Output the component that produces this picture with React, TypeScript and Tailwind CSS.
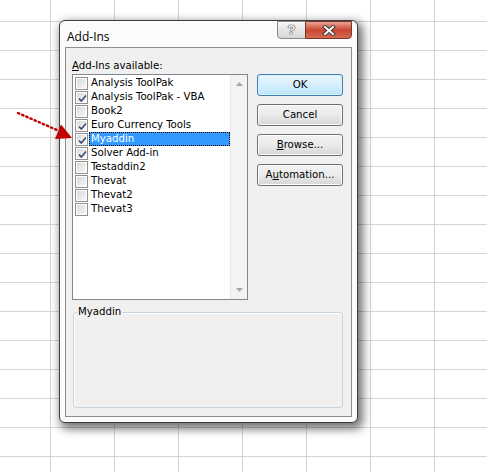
import React from "react";

const addins = [
  { name: "Analysis ToolPak", checked: false },
  { name: "Analysis ToolPak - VBA", checked: true },
  { name: "Book2", checked: false },
  { name: "Euro Currency Tools", checked: true },
  { name: "Myaddin", checked: true, selected: true },
  { name: "Solver Add-in", checked: true },
  { name: "Testaddin2", checked: false },
  { name: "Thevat", checked: false },
  { name: "Thevat2", checked: false },
  { name: "Thevat3", checked: false },
];

const ui = "font-['DejaVu_Sans_Condensed','Liberation_Sans',sans-serif] text-[11.3px]";

function CheckBox({ checked }: { checked: boolean }) {
  return (
    <div className="w-[13px] h-[13px] shrink-0 border border-[#8e8f8f] bg-white p-px">
      <div className="relative w-full h-full bg-gradient-to-br from-[#d9d9d9] to-[#f8f8f8]">
        {checked && (
          <svg className="absolute inset-0" width="11" height="11" viewBox="0 0 11 11">
            <path d="M2 5.5 L4.3 8 L9 2.5" fill="none" stroke="#3d4f7e" strokeWidth="1.7" />
          </svg>
        )}
      </div>
    </div>
  );
}

function Button({ label, u, isDefault }: { label: string; u?: number; isDefault?: boolean }) {
  const text =
    u === undefined ? (
      label
    ) : (
      <>
        {label.slice(0, u)}
        <span className="underline">{label[u]}</span>
        {label.slice(u + 1)}
      </>
    );
  return (
    <div
      className={`h-[22px] w-[86px] rounded-[3px] border flex items-center justify-center text-black ${
        isDefault
          ? "border-[#3c7fb1] bg-gradient-to-b from-[#eaf6fd] to-[#bee6fd] shadow-[inset_0_0_0_1px_#d9f0fc]"
          : "border-[#707070] bg-gradient-to-b from-[#f2f2f2] via-[#ebebeb] to-[#d6d6d6] shadow-[inset_0_0_0_1px_#fcfcfc]"
      }`}
    >
      {text}
    </div>
  );
}

export default function App() {
  return (
    <div className="relative w-[487px] h-[472px] overflow-hidden bg-white">
      {/* sheet grid */}
      <div className="grid grid-cols-[51px_repeat(7,64px)] grid-rows-[22px_repeat(16,29px)]">
        {Array.from({ length: 8 * 17 }).map((_, i) => (
          <div key={i} className="border-r border-b border-[#d4d4d4]" />
        ))}
      </div>

      {/* dialog */}
      <div className={`absolute left-[59px] top-[20px] w-[299px] h-[403px] rounded-[6px] border border-[#3d3d3d] bg-[#fbfbfb] shadow-[3px_4px_10px_2px_rgba(0,0,0,0.55)] flex flex-col ${ui}`}>
        <div className="relative h-[26px] shrink-0">
          <span className="absolute left-[7px] top-[7px] font-['Open_Sans',sans-serif] text-[12px] text-black">Add-Ins</span>
          <div className="absolute left-[217px] top-0 w-[29px] h-[18px] rounded-bl-[4px] border border-[#8a8a8a] bg-gradient-to-b from-[#f6f6f6] to-[#d6d6d6] flex items-center justify-center">
            <span className="font-['Liberation_Sans',sans-serif] text-[13px] font-bold text-[#f2f2f2] [text-shadow:0_0_1px_#444,0_0_1px_#444,0_0_1px_#444]">?</span>
          </div>
          <div className="absolute left-[245px] top-0 w-[47px] h-[18px] rounded-br-[4px] border border-[#7a3329] bg-gradient-to-b from-[#e8a395] via-[#c9462f] to-[#d86a52] flex items-center justify-center">
            <svg width="14" height="11" viewBox="0 0 14 11">
              <path d="M3 2 L11 9 M11 2 L3 9" stroke="#3a3a3a" strokeWidth="4" strokeLinecap="square" />
              <path d="M3 2 L11 9 M11 2 L3 9" stroke="#ffffff" strokeWidth="2" strokeLinecap="square" />
            </svg>
          </div>
        </div>

        <div className="mx-[5px] mb-[5px] flex-1 border border-[#8d8d8d] bg-[#f0f0f0] flex flex-col pl-[6px] pt-[11px]">
          <div className="h-[15px] leading-[13px] text-black">
            <span className="underline">A</span>dd-Ins available:
          </div>
          <div className="flex">
            <div className="w-[176px] h-[226px] border border-[#828790] bg-white flex">
              <div className="flex-1 flex flex-col pt-px pl-[2px]">
                {addins.map((a) => (
                  <div key={a.name} className="h-[14px] flex items-center">
                    <CheckBox checked={a.checked} />
                    <div
                      className={`ml-px h-[14px] flex-1 pl-[2px] leading-[14px] whitespace-nowrap ${
                        a.selected ? "bg-[#3399ff] text-white outline outline-1 outline-dotted outline-offset-[-1px] outline-[#000]" : "text-black"
                      }`}
                    >
                      {a.name}
                    </div>
                  </div>
                ))}
              </div>
              <div className="w-[17px] bg-[#f3f3f3] border-l border-[#e8e8e8] flex flex-col justify-between items-center py-[7px]">
                <svg width="7" height="4" viewBox="0 0 7 4"><path d="M0 4 L3.5 0 L7 4 Z" fill="#a8a8a8" /></svg>
                <svg width="7" height="4" viewBox="0 0 7 4"><path d="M0 0 L3.5 4 L7 0 Z" fill="#a8a8a8" /></svg>
              </div>
            </div>
            <div className="ml-[9px] flex flex-col gap-[8px]">
              <Button label="OK" isDefault />
              <Button label="Cancel" />
              <Button label="Browse..." u={0} />
              <Button label="Automation..." u={1} />
            </div>
          </div>
          <div className="relative mt-[12px] ml-px w-[270px] h-[96px] rounded-[3px] border border-[#c9d5de] shadow-[inset_1px_1px_0_#fff]">
            <span className="absolute left-[3px] top-[-8px] px-px bg-[#f0f0f0] text-black leading-[14px]">Myaddin</span>
          </div>
        </div>
      </div>

      {/* red dotted arrow */}
      <svg className="absolute left-0 top-0" width="80" height="150" viewBox="0 0 80 150">
        <path d="M18 113 L57 130" stroke="#c00000" strokeWidth="2.4" strokeDasharray="1.5 3" strokeLinecap="round" />
        <path d="M72 138 L61 124.5 L55 139 Z" fill="#c00000" />
      </svg>
    </div>
  );
}
